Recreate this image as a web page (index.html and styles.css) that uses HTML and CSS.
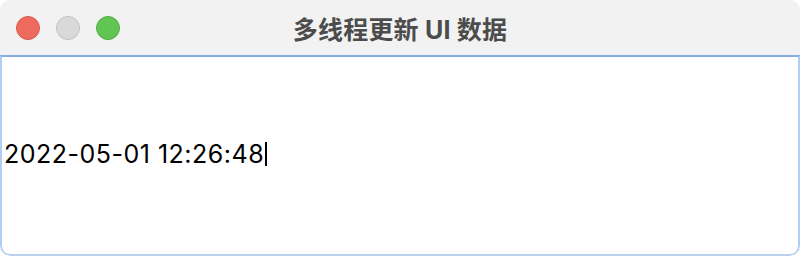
FILE: index.html
```html
<!DOCTYPE html>
<html lang="zh-CN">
<head>
<meta charset="utf-8">
<title>多线程更新UI数据</title>
<link rel="stylesheet" href="styles.css">
</head>
<body>
<div class="window">
  <div class="titlebar">
    <div class="lights">
      <span class="light red"></span>
      <span class="light gray"></span>
      <span class="light green"></span>
    </div>
    <div class="title">多线程更新 UI 数据</div>
    <div class="spacer"></div>
  </div>
  <div class="content">
    <div class="line"><span class="text">2022-05-01 12:26:48</span><span class="caret"></span></div>
  </div>
</div>
</body>
</html>
```
FILE: styles.css
```css
html, body {
  margin: 0;
  padding: 0;
  background: #ffffff;
}
.window {
  width: 800px;
  height: 256px;
  box-sizing: border-box;
  display: flex;
  flex-direction: column;
  border-radius: 10px;
  overflow: hidden;
  background: #ffffff;
}
.titlebar {
  height: 55px;
  flex: 0 0 55px;
  background: #f2f2f2;
  display: grid;
  grid-template-columns: 1fr auto 1fr;
  align-items: center;
}
.lights {
  display: flex;
  gap: 16px;
  padding-left: 16px;
}
.light {
  width: 24px;
  height: 24px;
  box-sizing: border-box;
  border-radius: 50%;
  display: block;
}
.red { background: #ee6a5f; border: 1px solid #d8594e; }
.gray { background: #d9d9d9; border: 1px solid #c1c1c1; }
.green { background: #61c554; border: 1px solid #51ab43; }
.title {
  font-family: "Inter", "Noto Sans CJK SC", sans-serif;
  font-weight: 700;
  font-size: 25px;
  color: #4c4c4c;
  letter-spacing: 0.2px;
  padding-top: 1px;
}
.content {
  flex: 1;
  border-top: 2px solid #85abe5;
  border-left: 2px solid #b0cdf5;
  border-right: 2px solid #b0cdf5;
  border-bottom: 2px solid #b9d0ee;
  border-radius: 0 0 10px 10px;
  display: flex;
  align-items: center;
  padding-left: 2px;
}
.line {
  display: flex;
  align-items: center;
  padding-bottom: 3px;
}
.text {
  font-family: "Inter", "Liberation Sans", sans-serif;
  font-size: 25px;
  color: #000000;
  letter-spacing: 0.5px;
}
.caret {
  width: 2px;
  height: 24px;
  background: #000000;
  margin-left: 1px;
}
```
